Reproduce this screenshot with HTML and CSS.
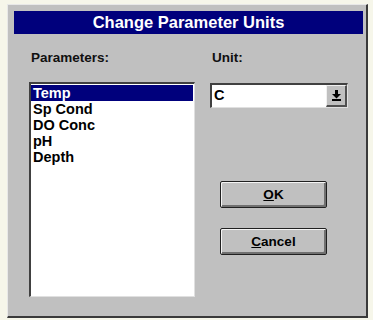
FILE: index.html
```html
<!DOCTYPE html>
<html lang="en">
<head>
    <meta charset="UTF-8">
    <title>Change Parameter Units</title>
    <link rel="stylesheet" href="styles.css">
</head>
<body>

    <div class="dialog">
        <div class="title-bar">Change Parameter Units</div>

        <div class="dialog-body">
            <div class="col-left">
                <div class="label">Parameters:</div>
                <ul class="listbox">
                    <li class="selected">Temp</li>
                    <li>Sp Cond</li>
                    <li>DO Conc</li>
                    <li>pH</li>
                    <li>Depth</li>
                </ul>
            </div>

            <div class="col-right">
                <div class="label">Unit:</div>
                <div class="combo">
                    <div class="combo-value">C</div>
                    <div class="combo-button">
                        <svg width="9" height="11" viewBox="0 0 9 11">
                            <rect x="3" y="0" width="3" height="4" fill="#000"/>
                            <polygon points="0,4 9,4 4.5,8.5" fill="#000"/>
                            <rect x="0" y="9" width="9" height="2" fill="#000"/>
                        </svg>
                    </div>
                </div>

                <button class="btn btn-ok"><u>O</u>K</button>
                <button class="btn btn-cancel"><u>C</u>ancel</button>
            </div>
        </div>
    </div>

</body>
</html>
```

FILE: styles.css
```css
* {
    margin: 0;
    padding: 0;
    box-sizing: border-box;
}

body {
    font-family: 'Liberation Sans', Arial, sans-serif;
    font-weight: bold;
    background-color: #f6f6ea;
    color: #000;
}

/* Dialog frame */
.dialog {
    width: 361px;
    height: 314px;
    margin: 4px 0 0 7px;
    padding: 6px 3px 0 6px;
    background: #c0c0c0;
    border-top: 1px solid #e8e8e8;
    border-left: 1px solid #e8e8e8;
    border-right: 2px solid #3a3a3a;
    border-bottom: 2px solid #3a3a3a;
}

.title-bar {
    height: 23px;
    background: #00007c;
    color: #fff;
    font-size: 16.5px;
    line-height: 23px;
    text-align: center;
}

.dialog-body {
    display: flex;
    gap: 15px;
    padding: 17px 0 0 15px;
}

.label {
    font-size: 13.5px;
    line-height: 14px;
    color: #101010;
    padding-left: 2px;
}

/* Parameters list */
.col-left {
    width: 166px;
}

.listbox {
    list-style: none;
    margin-top: 17px;
    height: 215px;
    background: #fff;
    border-top: 2px solid #404040;
    border-left: 2px solid #404040;
    border-right: 1px solid #e0e0e0;
    border-bottom: 1px solid #e0e0e0;
    padding-top: 1px;
}

.listbox li {
    font-size: 14.5px;
    line-height: 16px;
    padding-left: 2px;
    margin-right: 1px;
}

.listbox li.selected {
    background: #00007c;
    color: #fff;
}

/* Unit combo */
.col-right {
    display: flex;
    flex-direction: column;
}

.combo {
    display: flex;
    width: 138px;
    height: 25px;
    margin-top: 18px;
    background: #fff;
    border-top: 2px solid #404040;
    border-left: 2px solid #404040;
    border-right: 1px solid #e0e0e0;
    border-bottom: 1px solid #e0e0e0;
}

.combo-value {
    flex: 1;
    font-size: 14.5px;
    line-height: 21px;
    padding-left: 2px;
}

.combo-button {
    width: 21px;
    display: flex;
    align-items: center;
    justify-content: center;
    background: #c0c0c0;
    border-top: 1px solid #f0f0f0;
    border-left: 1px solid #f0f0f0;
    border-right: 2px solid #505050;
    border-bottom: 2px solid #505050;
}

/* Buttons */
.btn {
    font-family: inherit;
    font-weight: bold;
    font-size: 13.5px;
    width: 107px;
    height: 27px;
    margin-left: 10px;
    background: #c0c0c0;
    color: #000;
    border: 1px solid #202020;
    box-shadow: inset 1px 1px 0 #f4f4f4, inset -2px -2px 0 #707070;
    border-radius: 2px;
}

.btn-ok {
    margin-top: 73px;
}

.btn-cancel {
    margin-top: 20px;
}
```
